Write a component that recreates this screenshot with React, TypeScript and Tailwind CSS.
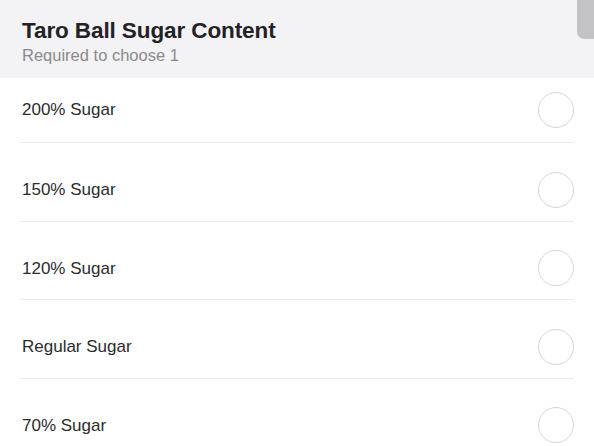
const options = ["200% Sugar", "150% Sugar", "120% Sugar", "Regular Sugar", "70% Sugar"];

const App = () => {
  return (
    <div
      className="relative w-[594px] h-[446px] overflow-hidden bg-white"
      style={{ fontFamily: '"Liberation Sans", Arial, sans-serif' }}
    >
      <div className="h-[78px] bg-[#f3f2f5] px-[22px] pt-[16px]">
        <h2 className="text-[22.5px] leading-[30px] font-semibold text-[#222226] tracking-[-0.1px]">
          Taro Ball Sugar Content
        </h2>
        <p className="text-[16.5px] leading-[19px] text-[#8a8a8e]">Required to choose 1</p>
      </div>
      <div className="px-5">
        {options.map((label, i) => (
          <div
            key={label}
            className={
              i === 0
                ? "h-[64px] flex items-center justify-between"
                : "h-[78.5px] pt-[16px] border-t border-[#ececee] flex items-center justify-between"
            }
          >
            <span className="pl-[2px] text-[17px] text-[#2b2b2e]">{label}</span>
            <span className="w-[36px] h-[36px] rounded-full border-[1.5px] border-[#d6d6d9]" />
          </div>
        ))}
      </div>
      <div className="absolute top-0 right-0 w-[17px] h-[39px] rounded-bl-[7px] bg-[#c3c3c7]" />
    </div>
  );
};

export default App;
